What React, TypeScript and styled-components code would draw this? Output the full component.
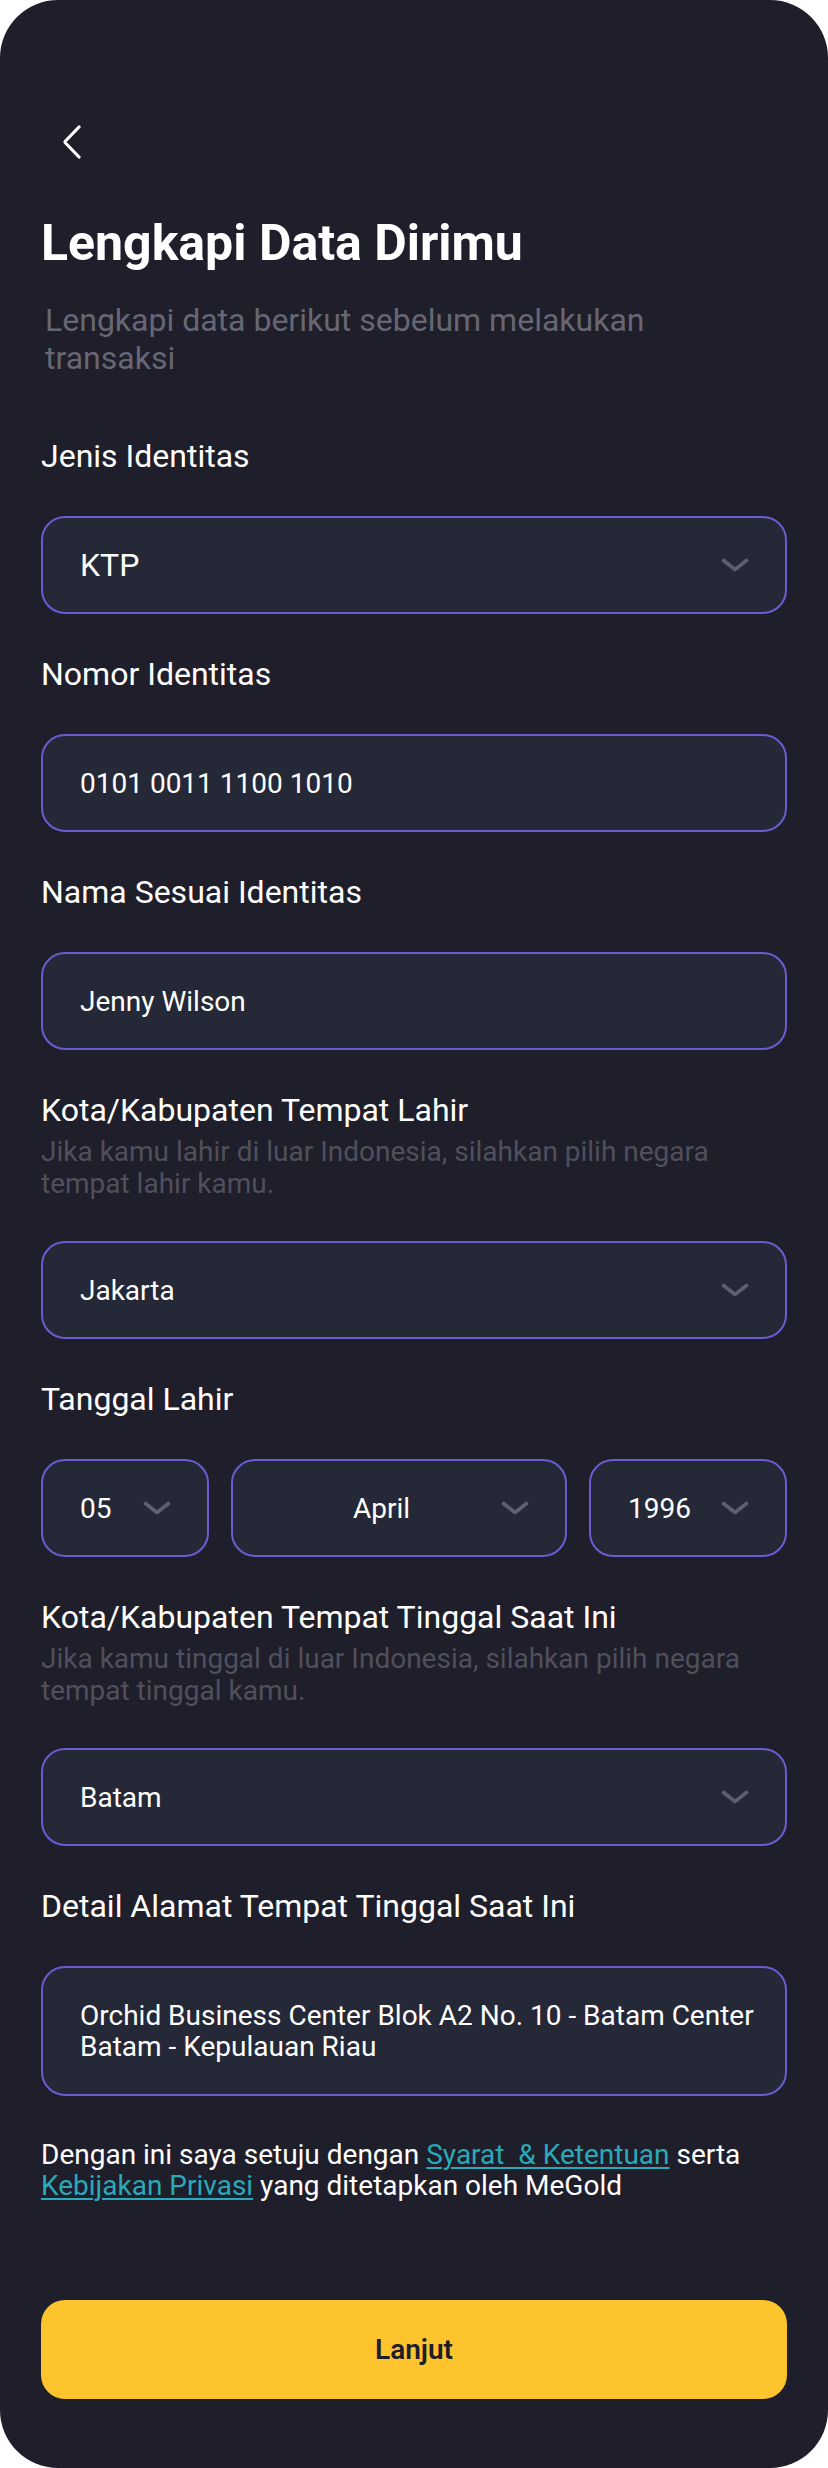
import React from "react";
import styled, { createGlobalStyle } from "styled-components";

const GlobalStyle = createGlobalStyle`
  html, body {
    margin: 0;
    padding: 0;
    background: #ffffff;
  }
  * { box-sizing: border-box; }
  body {
    font-family: Roboto, "Liberation Sans", Arial, sans-serif;
  }
`;

const Card = styled.div`
  width: 828px;
  height: 2468px;
  background: #1f1e2b;
  border-radius: 58px;
  padding: 126px 41px 69px;
  display: flex;
  flex-direction: column;
  font-family: Roboto, "Liberation Sans", Arial, sans-serif;
  color: #ffffff;
`;

const BackButton = styled.button`
  width: 24px;
  height: 32px;
  margin-left: 21px;
  padding: 0;
  border: none;
  background: transparent;
  display: flex;
  align-items: center;
  justify-content: flex-start;
  cursor: pointer;
`;

const Title = styled.h1`
  margin: 56px 0 0;
  font-size: 50px;
  line-height: 58px;
  font-weight: 700;
  color: #ffffff;
`;

const Subtitle = styled.p`
  margin: 29px 0 0;
  padding-left: 4px;
  max-width: 640px;
  font-size: 32px;
  line-height: 38px;
  font-weight: 400;
  color: #676774;
`;

const Form = styled.div`
  margin-top: 60px;
  display: flex;
  flex-direction: column;
  gap: 41px;
`;

const Field = styled.div`
  display: flex;
  flex-direction: column;
  gap: 41px;
`;

const LabelGroup = styled.div`
  display: flex;
  flex-direction: column;
`;

const Label = styled.label`
  font-size: 32px;
  line-height: 38px;
  font-weight: 400;
  color: #ffffff;
`;

const Helper = styled.p`
  margin: 7px 0 0;
  font-size: 28px;
  line-height: 32px;
  color: #50505c;
`;

const Box = styled.div<{ $tall?: boolean }>`
  height: ${(p) => (p.$tall ? "130px" : "98px")};
  background: #252836;
  border: 2px solid #6a5dd1;
  border-radius: 24px;
  padding: ${(p) => (p.$tall ? "32px 16px 32px 37px" : "0 36px 0 37px")};
  display: flex;
  align-items: center;
  justify-content: space-between;
  gap: 8px;
`;

const Value = styled.span<{ $size?: number; $center?: boolean }>`
  font-size: ${(p) => p.$size ?? 28}px;
  line-height: 31px;
  color: #ffffff;
  white-space: nowrap;
  ${(p) => (p.$center ? "flex: 1; text-align: center;" : "")}
`;

const AddressText = styled.span`
  font-size: 28px;
  line-height: 31px;
  color: #ffffff;
  white-space: nowrap;
  align-self: flex-start;
`;

const DateRow = styled.div`
  display: grid;
  grid-template-columns: 168px 1fr 198px;
  gap: 22px;
`;

const Terms = styled.p`
  margin: 43px 0 0;
  font-size: 28px;
  line-height: 31px;
  color: #ffffff;
`;

const Link = styled.a`
  color: #2aa9b9;
  text-decoration: underline;
  text-underline-offset: 3px;
  text-decoration-thickness: 2px;
  white-space: pre;
`;

const SubmitButton = styled.button`
  margin-top: auto;
  height: 99px;
  width: 100%;
  border: none;
  border-radius: 24px;
  background: #fec42d;
  color: #1e1e2a;
  font-family: Roboto, "Liberation Sans", Arial, sans-serif;
  font-size: 28px;
  font-weight: 600;
  cursor: pointer;
`;

const Chevron = () => (
  <svg width="28" height="14" viewBox="0 0 28 14" fill="none">
    <polyline
      points="2.5,2.5 14,11.5 25.5,2.5"
      stroke="#5e606c"
      strokeWidth="3.6"
      strokeLinecap="round"
      strokeLinejoin="round"
    />
  </svg>
);

const BackIcon = () => (
  <svg width="20" height="34" viewBox="0 0 20 34" fill="none">
    <path
      d="M17 2 L3.5 16 Q2.6 17 3.5 18 L17 32"
      stroke="#ffffff"
      strokeWidth="3.2"
      strokeLinecap="round"
      strokeLinejoin="round"
    />
  </svg>
);

type SelectProps = { value: string; size?: number; center?: boolean };

const Select = ({ value, size, center }: SelectProps) => (
  <Box>
    <Value $size={size} $center={center}>
      {value}
    </Value>
    <Chevron />
  </Box>
);

export default function App() {
  return (
    <>
      <GlobalStyle />
      <Card>
        <BackButton aria-label="Kembali">
          <BackIcon />
        </BackButton>
        <Title>Lengkapi Data Dirimu</Title>
        <Subtitle>Lengkapi data berikut sebelum melakukan transaksi</Subtitle>

        <Form>
          <Field>
            <Label>Jenis Identitas</Label>
            <Select value="KTP" size={32} />
          </Field>

          <Field>
            <Label>Nomor Identitas</Label>
            <Box>
              <Value>0101 0011 1100 1010</Value>
            </Box>
          </Field>

          <Field>
            <Label>Nama Sesuai Identitas</Label>
            <Box>
              <Value>Jenny Wilson</Value>
            </Box>
          </Field>

          <Field>
            <LabelGroup>
              <Label>Kota/Kabupaten Tempat Lahir</Label>
              <Helper>
                Jika kamu lahir di luar Indonesia, silahkan pilih negara tempat lahir kamu.
              </Helper>
            </LabelGroup>
            <Select value="Jakarta" />
          </Field>

          <Field>
            <Label>Tanggal Lahir</Label>
            <DateRow>
              <Select value="05" />
              <Select value="April" center />
              <Select value="1996" />
            </DateRow>
          </Field>

          <Field>
            <LabelGroup>
              <Label>Kota/Kabupaten Tempat Tinggal Saat Ini</Label>
              <Helper>
                Jika kamu tinggal di luar Indonesia, silahkan pilih negara tempat tinggal kamu.
              </Helper>
            </LabelGroup>
            <Select value="Batam" />
          </Field>

          <Field>
            <Label>Detail Alamat Tempat Tinggal Saat Ini</Label>
            <Box $tall>
              <AddressText>
                Orchid Business Center Blok A2 No. 10 - Batam Center
                <br />
                Batam - Kepulauan Riau
              </AddressText>
            </Box>
          </Field>
        </Form>

        <Terms>
          Dengan ini saya setuju dengan <Link href="#">{"Syarat  & Ketentuan"}</Link> serta{" "}
          <Link href="#">Kebijakan Privasi</Link> yang ditetapkan oleh MeGold
        </Terms>

        <SubmitButton>Lanjut</SubmitButton>
      </Card>
    </>
  );
}
